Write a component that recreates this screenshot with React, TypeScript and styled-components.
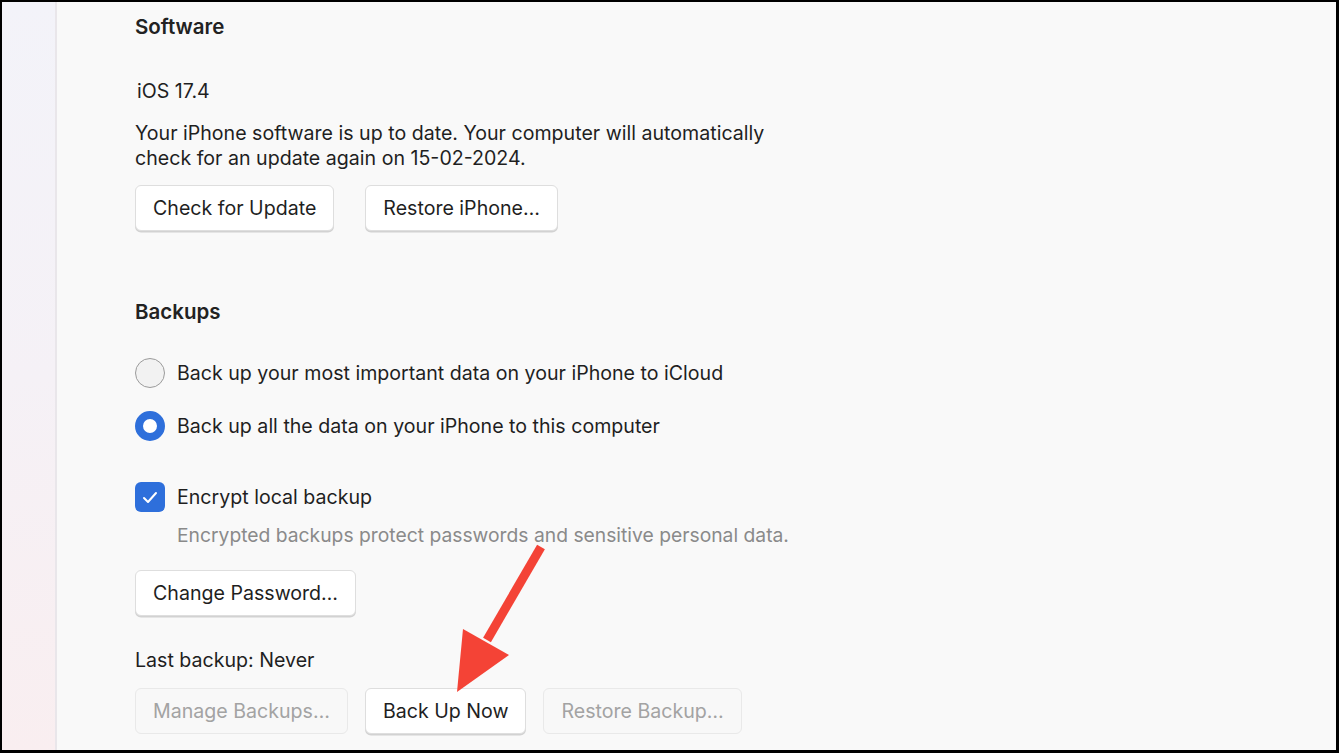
import React from "react";
import styled, { createGlobalStyle } from "styled-components";

const Global = createGlobalStyle`
  html, body { margin: 0; padding: 0; }
  body { font-family: Inter, "Noto Sans", sans-serif; -webkit-font-smoothing: antialiased; }
`;

const Frame = styled.div`
  width: 1339px;
  height: 753px;
  box-sizing: border-box;
  border-style: solid;
  border-color: #000;
  border-width: 2px 3px 3px 2px;
  display: flex;
  overflow: hidden;
  position: relative;
  background: #f9f9f9;
`;

const Sidebar = styled.div`
  width: 53px;
  flex: none;
  background: linear-gradient(180deg, #f3f3f9 0%, #f5f1f6 50%, #f9eef0 100%);
  border-right: 2px solid #e9e6ea;
`;

const Main = styled.main`
  flex: 1;
  padding: 13px 0 0 78px;
  color: #1f1f1f;
  font-size: 19.6px;
  line-height: 25px;
`;

const Heading = styled.h2<{ $mt?: number }>`
  margin: ${(p) => p.$mt ?? 0}px 0 0 0;
  font-size: 20.5px;
  font-weight: 600;
  line-height: 24px;
  color: #222;
`;

const Text = styled.p<{ $mt?: number; $ml?: number }>`
  margin: ${(p) => p.$mt ?? 0}px 0 0 ${(p) => p.$ml ?? 0}px;
  font-size: 19.6px;
  line-height: 25px;
`;

const SubText = styled(Text)`
  color: #8a8a8a;
  font-size: 19.3px;
`;

const ButtonRow = styled.div<{ $mt: number; $gap: number }>`
  display: flex;
  gap: ${(p) => p.$gap}px;
  margin-top: ${(p) => p.$mt}px;
`;

const Button = styled.button<{ $disabled?: boolean }>`
  height: 46px;
  box-sizing: border-box;
  padding: 0 17px;
  font-family: inherit;
  font-size: 19.6px;
  border-radius: 6px;
  border: 1px solid ${(p) => (p.$disabled ? "#e9e9e9" : "#dedede")};
  background: ${(p) => (p.$disabled ? "#f8f8f8" : "#ffffff")};
  color: ${(p) => (p.$disabled ? "#a3a3a3" : "#1f1f1f")};
  box-shadow: ${(p) => (p.$disabled ? "none" : "0 1.5px 0 #d2d2d2")};
`;

const OptionRow = styled.label<{ $mt: number }>`
  display: flex;
  align-items: center;
  gap: 12px;
  margin-top: ${(p) => p.$mt}px;
  height: 30px;
`;

const Radio = styled.span<{ $checked?: boolean }>`
  width: 30px;
  height: 30px;
  box-sizing: border-box;
  border-radius: 50%;
  flex: none;
  ${(p) =>
    p.$checked
      ? `background: #ffffff; border: 8px solid #2e6fdb;`
      : `background: #f2f2f2; border: 1.5px solid #9b9b9b;`}
`;

const Checkbox = styled.span`
  width: 30px;
  height: 30px;
  border-radius: 6px;
  background: #2e6fdb;
  flex: none;
  display: flex;
  align-items: center;
  justify-content: center;
`;

const Arrow = styled.svg`
  position: absolute;
  left: 0;
  top: 0;
  pointer-events: none;
`;

export default function App() {
  return (
    <>
      <Global />
      <Frame>
        <Sidebar />
        <Main>
          <Heading>Software</Heading>
          <Text $mt={40} $ml={2}>iOS 17.4</Text>
          <Text $mt={17}>
            Your iPhone software is up to date. Your computer will automatically
            <br />
            check for an update again on 15-02-2024.
          </Text>
          <ButtonRow $mt={14} $gap={31}>
            <Button>Check for Update</Button>
            <Button>Restore iPhone…</Button>
          </ButtonRow>

          <Heading $mt={69}>Backups</Heading>
          <OptionRow $mt={34}>
            <Radio />
            Back up your most important data on your iPhone to iCloud
          </OptionRow>
          <OptionRow $mt={23}>
            <Radio $checked />
            Back up all the data on your iPhone to this computer
          </OptionRow>
          <OptionRow $mt={41}>
            <Checkbox>
              <svg width="16" height="13" viewBox="0 0 16 13">
                <path d="M2 7 L6 11 L14 2" fill="none" stroke="#fff" strokeWidth="2" strokeLinecap="round" strokeLinejoin="round" />
              </svg>
            </Checkbox>
            Encrypt local backup
          </OptionRow>
          <SubText $mt={11} $ml={42}>
            Encrypted backups protect passwords and sensitive personal data.
          </SubText>
          <ButtonRow $mt={22} $gap={17}>
            <Button>Change Password…</Button>
          </ButtonRow>
          <Text $mt={32}>Last backup: Never</Text>
          <ButtonRow $mt={15} $gap={17}>
            <Button $disabled>Manage Backups…</Button>
            <Button>Back Up Now</Button>
            <Button $disabled>Restore Backup…</Button>
          </ButtonRow>
        </Main>
        <Arrow width="1339" height="753" viewBox="0 0 1339 753">
          <line x1="539" y1="545" x2="485" y2="638" stroke="#f44336" strokeWidth="9" />
          <polygon points="461,627 507,653 455,690" fill="#f44336" />
        </Arrow>
      </Frame>
    </>
  );
}
